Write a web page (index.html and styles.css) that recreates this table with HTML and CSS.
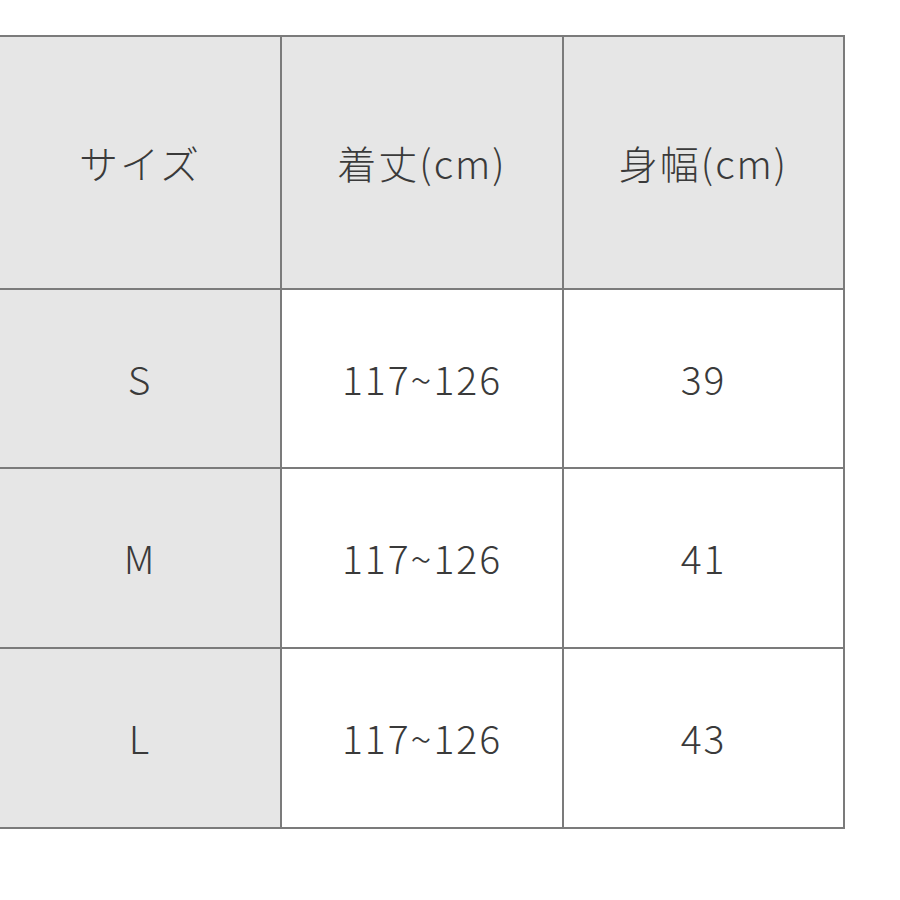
FILE: index.html
```html
<!DOCTYPE html>
<html lang="ja">
<head>
<meta charset="utf-8">
<link rel="stylesheet" href="styles.css">
</head>
<body>
<div class="table">
  <div class="cell head">サイズ</div>
  <div class="cell head">着丈(cm)</div>
  <div class="cell head">身幅(cm)</div>
  <div class="cell side">S</div>
  <div class="cell">117~126</div>
  <div class="cell">39</div>
  <div class="cell side">M</div>
  <div class="cell">117~126</div>
  <div class="cell">41</div>
  <div class="cell side">L</div>
  <div class="cell">117~126</div>
  <div class="cell">43</div>
</div>
</body>
</html>
```
FILE: styles.css
```css
html, body {
  margin: 0;
  padding: 0;
  background: #ffffff;
}
body {
  padding-top: 35px;
  font-family: "Noto Sans CJK JP", "Noto Sans", sans-serif;
  color: #3a3a3a;
}
.table {
  width: 845px;
  box-sizing: border-box;
  display: grid;
  grid-template-columns: 280px 280px 279px;
  grid-template-rows: 251px 177px 178px 178px;
  gap: 2px;
  padding: 2px 2px 2px 0;
  background: #7b7b7b;
}
.cell {
  background: #ffffff;
  display: flex;
  align-items: center;
  justify-content: center;
  font-size: 39px;
  font-weight: 300;
  letter-spacing: 2px;
  padding-bottom: 2px;
}
.head, .side {
  background: #e6e6e6;
}
```
